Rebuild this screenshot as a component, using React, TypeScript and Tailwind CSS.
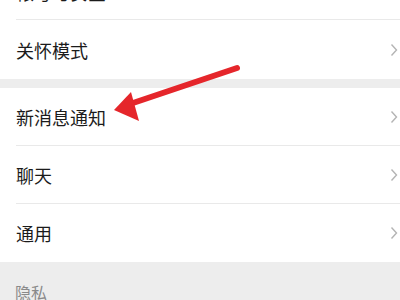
import React from "react";

const font = { fontFamily: '"Noto Sans CJK SC", "Noto Sans", sans-serif' };

function Chevron() {
  return (
    <svg width="8" height="14" viewBox="0 0 8 14" className="absolute right-[2px] top-1/2 -translate-y-1/2">
      <polyline points="1.5,1.5 6.5,7 1.5,12.5" fill="none" stroke="#b4b4b4" strokeWidth="1.4" />
    </svg>
  );
}

function Row({ label, h = "h-[58px]", border = true }: { label: string; h?: string; border?: boolean }) {
  return (
    <div className={`bg-white pl-4 ${h}`}>
      <div className={`relative flex h-full items-center ${border ? "border-b border-[#e9e9e9]" : ""}`}>
        <span className="text-[18px] leading-none text-[#1b1b1b]">{label}</span>
        <Chevron />
      </div>
    </div>
  );
}

export default function App() {
  return (
    <div className="relative h-[300px] w-[400px] overflow-hidden bg-[#ededed]" style={font}>
      <div className="-mt-[36px] flex flex-col">
        <Row label="帐号与安全" h="h-[56px]" />
        <Row label="关怀模式" h="h-[59px]" border={false} />
        <div className="h-[9px]" />
        <Row label="新消息通知" />
        <Row label="聊天" />
        <Row label="通用" border={false} />
        <div className="pl-[15px] pt-[22px] text-[16px] leading-none text-[#8a8a8a]">隐私</div>
      </div>
      <svg className="pointer-events-none absolute left-0 top-0" width="400" height="300">
        <line x1="237" y1="68" x2="130" y2="104" stroke="#e5262b" strokeWidth="6" strokeLinecap="round" />
        <polygon points="114,110 131,92 139,121" fill="#e5262b" />
      </svg>
    </div>
  );
}
